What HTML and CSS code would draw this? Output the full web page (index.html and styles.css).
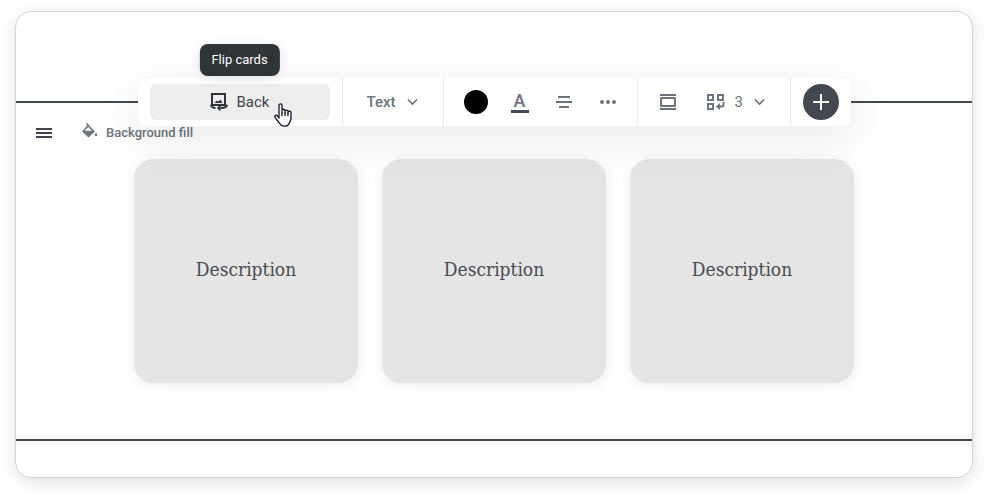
FILE: index.html
```html
<!DOCTYPE html>
<html lang="en">
<head>
    <meta charset="utf-8">
    <title>Flip cards editor</title>
    <link rel="stylesheet" href="styles.css">
</head>
<body>
    <main class="panel">
        <section class="block">
            <div class="block-tools">
                <button type="button" class="icon-btn menu-btn" aria-label="Block menu">
                    <svg width="16" height="10" viewBox="0 0 16 10" fill="currentColor"><path d="M0 0h16v2H0zM0 4h16v2H0zM0 8h16v2H0z"/></svg>
                </button>
                <button type="button" class="fill-btn">
                    <svg width="16" height="16" viewBox="0 0 16 16">
                        <path d="M6 1.500l7 7-6.500 6L0 8.500z" fill="currentColor"/>
                        <path d="M6.300 4l3.700 3.800H2.600z" fill="#fff"/>
                        <path d="M4.500.500L7 3" stroke="currentColor" stroke-width="1.500"/>
                        <path d="M14 9.500c.9 1.400 1.200 1.900 1.200 2.500a1.200 1.200 0 0 1-2.400 0c0-.6.3-1.100 1.200-2.500z" fill="currentColor"/>
                    </svg>
                    Background fill
                </button>
            </div>

            <div class="cards">
                <article class="card">Description</article>
                <article class="card">Description</article>
                <article class="card">Description</article>
            </div>

            <!-- Floating toolbar, sits on the top edge of the block -->
            <div class="toolbar" role="toolbar" aria-label="Card tools">
                <div class="group group-flip">
                    <button type="button" class="flip-btn" aria-describedby="flip-tip">
                        <svg width="18" height="20" viewBox="0 0 18 20" fill="none" stroke="currentColor" stroke-width="2">
                            <path d="M2 2h13v11H2z"/>
                            <path d="M4.500 11l2.300-2.500 1.500 1.200L10.400 7.500 12.500 11z" fill="currentColor" stroke="none"/>
                            <path d="M1 12.800c0 1.700 1.800 2.900 4.500 3.400M17 12.800c0 1.900-2 3.200-6.500 3.300"/>
                            <path d="M10.500 12.600v6.800L6.800 16z" fill="currentColor" stroke="none"/>
                        </svg>
                        Back
                    </button>
                    <span class="tooltip" id="flip-tip" role="tooltip">Flip cards</span>
                    <svg class="pointer" width="18" height="24" viewBox="0 0 18 24" fill="#fff" stroke="#15152b" stroke-width="1.300" stroke-linejoin="round" stroke-linecap="round">
                        <path d="M5 15V2.300C5 .4 8 .4 8 2.300V10 7.500c0-1.700 3-1.700 3 0V10 8.300c0-1.600 3-1.600 3 0v2.200-1.200c0-1.500 3-1.400 3 .2V15c0 2-1 3.500-1.500 4.700-.8 2-2 3.500-5 3.500-3.200 0-4-1-5.200-3.200L1.200 14.700c-1-1.800.6-3.200 2.100-1.900z"/>
                        <path d="M8 10v2.500M11 10v2.500M14 10.500v2"/>
                    </svg>
                </div>
                <div class="group group-type">
                    <label class="pick">
                        <select aria-label="Element type">
                            <option>Text</option>
                        </select>
                        <svg width="12" height="8" viewBox="0 0 12 8" fill="none" stroke="currentColor" stroke-width="1.700"><path d="M1 1.500L5.500 6 10 1.500"/></svg>
                    </label>
                </div>
                <div class="group group-format">
                    <button type="button" class="icon-btn" aria-label="Colour"><span class="swatch"></span></button>
                    <button type="button" class="icon-btn" aria-label="Text colour">
                        <span class="letter">A</span>
                    </button>
                    <button type="button" class="icon-btn" aria-label="Align">
                        <svg width="16" height="12" viewBox="0 0 16 12" fill="currentColor"><path d="M2 0h12v2H2zM0 5h16v2H0zM3 10h10v2H3z"/></svg>
                    </button>
                    <button type="button" class="icon-btn" aria-label="More">
                        <svg width="16" height="4" viewBox="0 0 16 4" fill="currentColor"><circle cx="2" cy="2" r="2"/><circle cx="8" cy="2" r="2"/><circle cx="14" cy="2" r="2"/></svg>
                    </button>
                </div>
                <div class="group group-layout">
                    <button type="button" class="icon-btn" aria-label="Width">
                        <svg width="16" height="16" viewBox="0 0 16 16" fill="none" stroke="currentColor" stroke-width="2"><path d="M0 1h16M0 15h16"/><rect x="1" y="4" width="14" height="8" rx=".5"/></svg>
                    </button>
                    <label class="pick">
                        <svg width="18" height="16" viewBox="0 0 18 16" fill="none" stroke="currentColor" stroke-width="2">
                            <path d="M1 1h5v5H1zM11 1h5v5h-5zM1 10h5v5H1z"/>
                            <path d="M16.500 8v2.700q0 1.800-1.800 1.800H11"/>
                            <path d="M13 9v7l-4.200-3.500z" fill="currentColor" stroke="none"/>
                        </svg>
                        <select class="count" aria-label="Cards in a row">
                            <option>3</option>
                        </select>
                        <svg width="12" height="8" viewBox="0 0 12 8" fill="none" stroke="currentColor" stroke-width="1.700"><path d="M1 1.500L5.500 6 10 1.500"/></svg>
                    </label>
                </div>
                <div class="group group-add">
                    <button type="button" class="add-btn" aria-label="Add">
                        <svg width="16" height="16" viewBox="0 0 16 16" stroke="currentColor" stroke-width="2"><path d="M8 0v16M0 8h16"/></svg>
                    </button>
                </div>
            </div>
        </section>
    </main>
</body>
</html>
```
FILE: styles.css
```css
body {
    margin: 0;
    padding: 11px 15px 19px;
    background-color: #fff;
    font-family: Roboto, "Liberation Sans", sans-serif;
    color: #6d747c;
}
button,
select {
    margin: 0;
    padding: 0;
    border: none;
    background: none;
    color: inherit;
    font: inherit;
    cursor: pointer;
}
svg {
    display: block;
    flex: none;
}
.panel {
    padding: 89px 0 36px;
    border: 1px solid #d3d3d3;
    border-radius: 16px;
    box-shadow: 0 4px 16px rgba(0, 0, 0, 0.12);
}
.block {
    position: relative;
    padding: 18px 20px 56px;
    border-top: 2px solid #45484e;
    border-bottom: 2px solid #45484e;
}
.block-tools {
    display: flex;
    align-items: center;
    gap: 26px;
    height: 24px;
    margin-bottom: 14px;
}
.icon-btn {
    display: flex;
    align-items: center;
    justify-content: center;
    width: 24px;
    height: 24px;
}
.menu-btn {
    width: 20px;
    justify-content: flex-start;
    color: #404349;
}
.fill-btn {
    display: flex;
    align-items: center;
    gap: 8px;
    font-size: 13px;
    font-weight: 500;
    line-height: 16px;
}
.fill-btn svg {
    margin-bottom: 4px;
}
.cards {
    display: grid;
    grid-template-columns: repeat(3, 224px);
    justify-content: center;
    gap: 24px;
}
.card {
    display: flex;
    align-items: center;
    justify-content: center;
    aspect-ratio: 1;
    padding-bottom: 4px;
    box-sizing: border-box;
    border-radius: 20px;
    background-color: #e5e5e5;
    box-shadow: 0 2px 12px rgba(0, 0, 0, 0.08);
    color: #484b51;
    font-family: "DejaVu Serif Condensed", "DejaVu Serif", serif;
    font-size: 19px;
}

/* toolbar */
.toolbar {
    position: absolute;
    top: -25px;
    left: 0;
    right: 0;
    display: flex;
    width: fit-content;
    height: 48px;
    margin: 0 auto;
    border-radius: 8px;
    background-color: #fff;
    box-shadow: 0 12px 48px rgba(0, 0, 0, 0.09);
    font-size: 15px;
    font-weight: 500;
}
.group {
    display: flex;
    align-items: center;
}
.group + .group {
    border-left: 1px solid #ebebeb;
}
.group-flip {
    position: relative;
    padding: 0 12px;
}
.flip-btn {
    display: flex;
    align-items: center;
    justify-content: center;
    gap: 9px;
    width: 180px;
    height: 36px;
    border-radius: 6px;
    background-color: #eee;
    color: #3f4348;
    font-weight: 400;
}
.flip-btn svg {
    color: #2f3437;
}
.tooltip {
    position: absolute;
    bottom: 50px;
    left: 50%;
    transform: translateX(-50%);
    padding: 8px 12px;
    border-radius: 8px;
    background-color: #2f3437;
    box-shadow: 0 2px 12px rgba(0, 0, 0, 0.1);
    color: #fff;
    font-size: 13px;
    font-weight: 400;
    line-height: 16px;
    white-space: nowrap;
}
.pointer {
    position: absolute;
    top: 25px;
    left: 136px;
}
.group-type {
    padding: 0 24px;
}
.group-format {
    gap: 20px;
    padding: 0 17px 0 20px;
}
.group-layout {
    gap: 27px;
    padding: 0 24px 0 18px;
}
.group-add {
    padding: 0 12px;
}
.pick {
    display: flex;
    align-items: center;
    gap: 10px;
}
.pick select {
    appearance: none;
}
.count {
    font-weight: 400;
}
.swatch {
    width: 24px;
    height: 24px;
    border-radius: 50%;
    background-color: #000;
}
.letter {
    width: 18px;
    border-bottom: 3px solid #464a51;
    font-size: 18px;
    line-height: 19px;
    text-align: center;
}
.add-btn {
    display: flex;
    align-items: center;
    justify-content: center;
    width: 36px;
    height: 36px;
    border-radius: 50%;
    background-color: #43484e;
    color: #fff;
}
```
